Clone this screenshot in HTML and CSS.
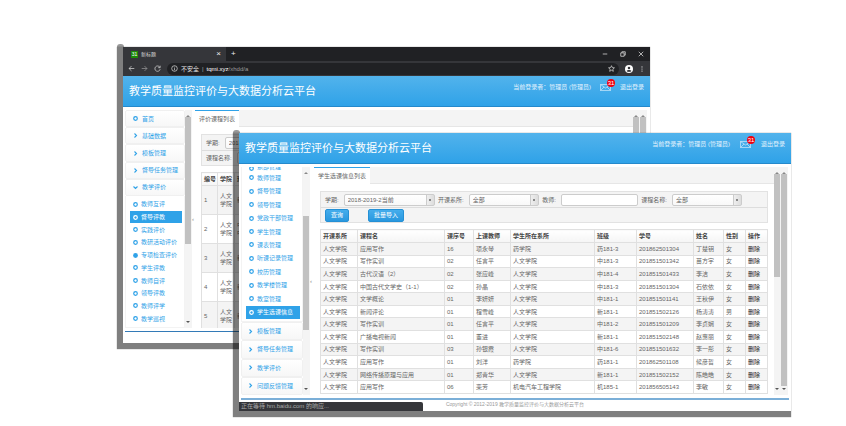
FILE: index.html
```html
<!DOCTYPE html>
<html lang="zh-CN">
<head>
<meta charset="utf-8">
<meta name="viewport" content="width=device-width, initial-scale=1">
<title>教学质量监控评价与大数据分析云平台</title>
<link rel="stylesheet" href="styles.css">
</head>
<body>
<svg class="sprite" aria-hidden="true">
  <symbol id="ring" viewBox="0 0 10 10"><circle cx="5" cy="5" r="3.6" fill="none" stroke="currentColor" stroke-width="2.4"/></symbol>
  <symbol id="dot" viewBox="0 0 10 10"><circle cx="5" cy="5" r="4.8" fill="currentColor"/></symbol>
  <symbol id="right" viewBox="0 0 10 10"><path d="M3 1l4 4-4 4" fill="none" stroke="currentColor" stroke-width="2.2"/></symbol>
  <symbol id="down" viewBox="0 0 10 10"><path d="M1 3l4 4 4-4" fill="none" stroke="currentColor" stroke-width="2.2"/></symbol>
  <symbol id="mail" viewBox="0 0 22 14"><path d="M1 1h20v12H1zM1 1l10 7 10-7M1 13l7-7M21 13l-7-7" fill="none" stroke="currentColor" stroke-width="1.2"/></symbol>
</svg>
<main class="desktop">
  <section class="window window-back">
    <div class="tabstrip">
      <div class="browser-tab"><span class="favicon">31</span><span>新标题</span><button class="close" aria-label="关闭标签">×</button></div>
      <button class="new-tab" aria-label="新标签">+</button>
      <div class="controls">
        <svg viewBox="0 0 8 8"><path d="M1 4h6"/></svg>
        <svg viewBox="0 0 8 8"><path d="M1 2.500h4.500V7H1zM2.500 2.500V1H7v4.500H5.500"/></svg>
        <svg viewBox="0 0 8 8"><path d="M1 1l6 6M7 1L1 7"/></svg>
      </div>
    </div>
    <div class="addressbar">
      <svg class="nav" viewBox="0 0 10 10"><path d="M9 5H1.500M5 1.500L1.500 5 5 8.500"/></svg>
      <svg class="nav dim" viewBox="0 0 10 10"><path d="M1 5h7.500M5 1.500L8.500 5 5 8.500"/></svg>
      <svg class="nav" viewBox="0 0 10 10"><path d="M8.200 3A3.800 3.800 0 1 0 8.800 6M8.800 1v2.800H6"/></svg>
      <div class="url">
        <svg viewBox="0 0 10 10"><circle cx="5" cy="5" r="4"/><path d="M5 4.500V7.500M5 2.500v1"/></svg>
        <span>不安全</span><span class="dim">|</span><span class="address"><b>tqmi.xyz</b>/xhdd/a</span>
        <svg class="star" viewBox="0 0 10 10"><path d="M5 1l1.200 2.700 3 .3-2.300 2 .7 3L5 7.500 2.400 9l.7-3L.8 4l3-.3z"/></svg>
      </div>
      <svg class="avatar" viewBox="0 0 10 10"><circle cx="5" cy="5" r="5" fill="#fff"/><circle cx="5" cy="3.800" r="1.600" fill="#35363a"/><path d="M2 7.500C3 5.800 7 5.800 8 7.500 7 9 3 9 2 7.500z" fill="#35363a"/></svg>
      <svg class="more" viewBox="0 0 10 10"><circle cx="5" cy="1.500" r="1"/><circle cx="5" cy="5" r="1"/><circle cx="5" cy="8.500" r="1"/></svg>
    </div>
    <header class="banner">
      <h1>教学质量监控评价与大数据分析云平台</h1>
      <div class="account"><span>当前登录者：管理员 (管理员)</span><a class="mail" href="#" aria-label="消息"><svg><use href="#mail"/></svg><span class="badge">31</span></a><a href="#">退出登录</a></div>
    </header>
    <div class="workspace">
      <nav class="sidebar">
        <a class="group" href="#"><svg><use href="#ring"/></svg>首页</a>
        <a class="group" href="#"><svg><use href="#right"/></svg>基础数据</a>
        <a class="group" href="#"><svg><use href="#right"/></svg>模板管理</a>
        <a class="group" href="#"><svg><use href="#right"/></svg>督导任务管理</a>
        <a class="group open" href="#"><svg><use href="#down"/></svg>教学评价</a>
        <div class="submenu">
          <a href="#"><svg><use href="#ring"/></svg>教师互评</a>
          <a class="active" href="#"><svg><use href="#ring"/></svg>督导评教</a>
          <a href="#"><svg><use href="#ring"/></svg>实践评价</a>
          <a href="#"><svg><use href="#ring"/></svg>教研活动评价</a>
          <a href="#"><svg><use href="#dot"/></svg>专项检查评价</a>
          <a href="#"><svg><use href="#ring"/></svg>学生评教</a>
          <a href="#"><svg><use href="#ring"/></svg>教师自评</a>
          <a href="#"><svg><use href="#ring"/></svg>领导评教</a>
          <a href="#"><svg><use href="#ring"/></svg>教师评学</a>
          <a href="#"><svg><use href="#ring"/></svg>教学巡视</a>
        </div>
      </nav>
      <div class="scrollbar"><i class="up"></i><i class="thumb thumb-mid"></i><i class="down"></i></div>
      <div class="splitter">‹</div>
      <div class="content">
        <div class="tabs"><a class="tab" href="#">评价课程列表</a></div>
        <div class="panel">
          <form class="filters">
            <div class="filter-row"><label>学期:<select><option>2018-2019-2当前</option></select></label></div>
            <div class="filter-row"><label>课程名称:<select><option>全部</option></select></label></div>
          </form>
          <table class="grid tall">
            <colgroup><col class="w-no"><col class="w-dept-s"><col></colgroup>
            <thead><tr><th>编号</th><th>学院</th><th>班级</th></tr></thead>
            <tbody>
              <tr><td>1</td><td>人文学院</td><td>新181-1</td></tr>
              <tr><td>2</td><td>人文学院</td><td>中181-1<br>中181-2</td></tr>
              <tr><td>3</td><td>人文学院</td><td>新181-1</td></tr>
              <tr><td>4</td><td>人文学院</td><td>新181-1</td></tr>
              <tr><td>5</td><td>人文学院</td><td>新181-1</td></tr>
              <tr><td></td><td></td><td></td></tr>
            </tbody>
          </table>
        </div>
      </div>
      <div class="scrollbar"><i class="up"></i><i class="thumb thumb-mid"></i><i class="down"></i></div>
      <div class="scrollbar"><i class="up"></i><i class="thumb thumb-long"></i><i class="down"></i></div>
    </div>
    <footer class="footer"></footer>
  </section>

  <section class="window window-front">
    <header class="banner">
      <h1>教学质量监控评价与大数据分析云平台</h1>
      <div class="account"><span>当前登录者：管理员 (管理员)</span><a class="mail" href="#" aria-label="消息"><svg><use href="#mail"/></svg><span class="badge">31</span></a><a href="#">退出登录</a></div>
    </header>
    <div class="workspace">
      <nav class="sidebar">
        <div class="submenu">
          <a class="clipped" href="#"><svg><use href="#ring"/></svg>系部管理</a>
          <a href="#"><svg><use href="#ring"/></svg>教师管理</a>
          <a href="#"><svg><use href="#ring"/></svg>督导管理</a>
          <a href="#"><svg><use href="#ring"/></svg>领导管理</a>
          <a href="#"><svg><use href="#ring"/></svg>党政干部管理</a>
          <a href="#"><svg><use href="#ring"/></svg>学生管理</a>
          <a href="#"><svg><use href="#ring"/></svg>课表管理</a>
          <a href="#"><svg><use href="#ring"/></svg>听课记录管理</a>
          <a href="#"><svg><use href="#ring"/></svg>校历管理</a>
          <a href="#"><svg><use href="#ring"/></svg>教学楼管理</a>
          <a href="#"><svg><use href="#ring"/></svg>教室管理</a>
          <a class="active" href="#"><svg><use href="#ring"/></svg>学生选课信息</a>
        </div>
        <a class="group" href="#"><svg><use href="#right"/></svg>模板管理</a>
        <a class="group" href="#"><svg><use href="#right"/></svg>督导任务管理</a>
        <a class="group" href="#"><svg><use href="#right"/></svg>教学评价</a>
        <a class="group" href="#"><svg><use href="#right"/></svg>问题反馈管理</a>
      </nav>
      <div class="scrollbar"><i class="up"></i><i class="thumb thumb-low"></i><i class="down"></i></div>
      <div class="splitter">‹</div>
      <div class="content">
        <div class="tabs"><a class="tab" href="#">学生选课信息列表</a></div>
        <div class="panel">
          <form class="filters">
            <div class="filter-row">
              <label>学期:<select class="wide"><option>2018-2019-2当前</option></select></label>
              <label>开课系所:<select><option>全部</option></select></label>
              <label>教师:<input type="text"></label>
              <label>课程名称:<select><option>全部</option></select></label>
            </div>
            <div class="filter-row actions"><button type="button">查询</button><button type="button">批量导入</button></div>
          </form>
          <table class="grid">
            <colgroup><col class="w-dept"><col><col class="w-seq"><col class="w-teacher"><col class="w-school"><col class="w-class"><col class="w-id"><col class="w-name"><col class="w-act"><col class="w-act"></colgroup>
            <thead><tr><th>开课系所</th><th>课程名</th><th>课序号</th><th>上课教师</th><th>学生所在系所</th><th>班级</th><th>学号</th><th>姓名</th><th>性别</th><th>操作</th></tr></thead>
            <tbody>
              <tr><td>人文学院</td><td>应用写作</td><td>16</td><td>项永琴</td><td>药学院</td><td>药181-3</td><td>201862501304</td><td>丁楚钥</td><td>女</td><td><a href="#">删除</a></td></tr>
              <tr><td>人文学院</td><td>写作实训</td><td>02</td><td>任言平</td><td>人文学院</td><td>中181-3</td><td>201851501342</td><td>苗方宇</td><td>女</td><td><a href="#">删除</a></td></tr>
              <tr><td>人文学院</td><td>古代汉语（2）</td><td>02</td><td>张应峰</td><td>人文学院</td><td>中181-4</td><td>201851501433</td><td>李洁</td><td>女</td><td><a href="#">删除</a></td></tr>
              <tr><td>人文学院</td><td>中国古代文学史（1-1）</td><td>02</td><td>孙晶</td><td>人文学院</td><td>中181-3</td><td>201851501304</td><td>石依依</td><td>女</td><td><a href="#">删除</a></td></tr>
              <tr><td>人文学院</td><td>文学概论</td><td>01</td><td>李妍妍</td><td>人文学院</td><td>中181-1</td><td>201851501141</td><td>王秋伊</td><td>女</td><td><a href="#">删除</a></td></tr>
              <tr><td>人文学院</td><td>新闻评论</td><td>01</td><td>程雪峰</td><td>人文学院</td><td>新181-1</td><td>201851502126</td><td>杨涛涛</td><td>男</td><td><a href="#">删除</a></td></tr>
              <tr><td>人文学院</td><td>写作实训</td><td>01</td><td>任言平</td><td>人文学院</td><td>中181-2</td><td>201851501209</td><td>李贞娴</td><td>女</td><td><a href="#">删除</a></td></tr>
              <tr><td>人文学院</td><td>广播电视新闻</td><td>01</td><td>董进</td><td>人文学院</td><td>新181-1</td><td>201851502148</td><td>赵惠丽</td><td>女</td><td><a href="#">删除</a></td></tr>
              <tr><td>人文学院</td><td>写作实训</td><td>03</td><td>孙银霞</td><td>人文学院</td><td>中181-6</td><td>201851501632</td><td>李一彤</td><td>女</td><td><a href="#">删除</a></td></tr>
              <tr><td>人文学院</td><td>应用写作</td><td>01</td><td>刘洋</td><td>药学院</td><td>药181-1</td><td>201862501108</td><td>候彦哲</td><td>女</td><td><a href="#">删除</a></td></tr>
              <tr><td>人文学院</td><td>网络传播原理与应用</td><td>01</td><td>郑青华</td><td>人文学院</td><td>新181-1</td><td>201851502152</td><td>陈皓皓</td><td>女</td><td><a href="#">删除</a></td></tr>
              <tr><td>人文学院</td><td>应用写作</td><td>06</td><td>栾芳</td><td>机电汽车工程学院</td><td>机185-1</td><td>201856505143</td><td>李敏</td><td>女</td><td><a href="#">删除</a></td></tr>
            </tbody>
          </table>
        </div>
      </div>
      <div class="scrollbar"><i class="up"></i><i class="thumb thumb-half"></i><i class="down"></i></div>
      <div class="scrollbar"><i class="up"></i><i class="thumb thumb-long"></i><i class="down"></i></div>
    </div>
    <footer class="footer">Copyright © 2012-2019 教学质量监控评价与大数据分析云平台</footer>
    <div class="status">正在等待 hm.baidu.com 的响应...</div>
  </section>
</main>
</body>
</html>
```
FILE: styles.css
```css
* { box-sizing: border-box; }
body {
  margin: 0;
  background: #fff;
  color: #666;
  font: 6px/8px "Liberation Sans", "Noto Sans CJK SC", sans-serif;
}
a { color: inherit; text-decoration: none; }
button, select, input { font: inherit; color: inherit; margin: 0; padding: 0; }
.sprite { position: absolute; width: 0; height: 0; }
.desktop { position: relative; min-height: 100vh; }

/* Windows */
.window {
  position: absolute;
  display: flex;
  flex-direction: column;
  background: #fff;
  box-shadow: -3px 3px 1px 3px rgba(0, 0, 0, .5);
}
.window::before {
  content: "";
  position: absolute;
  left: -6px;
  top: -3px;
  width: 7px;
  height: 3px;
  border-radius: 3px 3px 0 0;
  background: rgba(0, 0, 0, .4);
}
.window-back { top: 47px; left: calc(50% - 300px); right: calc(50% - 227px); }
.window-front { top: 133px; left: calc(50% - 184px); right: calc(50% - 368px); }

/* Browser chrome */
.tabstrip { display: flex; align-items: center; height: 14px; background: #202124; color: #ddd; }
.browser-tab { display: flex; align-items: center; gap: 3px; width: 103px; height: 14px; padding: 0 5px 0 8px; background: #35363a; font-size: 5px; }
.favicon { width: 7px; height: 7px; background: #1c8a08; color: #fff; font-size: 5px; line-height: 7px; text-align: center; }
.close, .new-tab { border: 0; background: none; color: #eee; font-size: 8px; line-height: 8px; }
.close { margin-left: auto; }
.new-tab { margin-left: 5px; }
.controls { display: flex; gap: 12px; margin-left: auto; padding-right: 6px; }
.controls svg { width: 6px; height: 6px; }
.controls svg, .nav, .url svg { fill: none; stroke: #ddd; stroke-width: 1; }
.addressbar { display: flex; align-items: center; gap: 6px; height: 15px; padding: 0 5px; background: #35363a; color: #e8e8e8; }
.nav { width: 7px; height: 7px; }
.url { display: flex; flex: 1; align-items: center; gap: 3px; height: 12px; padding: 0 4px; border-radius: 6px; background: #202124; }
.url svg { width: 7px; height: 7px; }
.url .star { margin-left: auto; }
.dim { opacity: .6; }
.address { color: #999; }
.address b { color: #fff; font-weight: 400; }
.avatar { width: 8px; height: 8px; }
.more { width: 6px; height: 6px; fill: #ddd; }

/* Application header */
.banner {
  display: flex;
  align-items: center;
  justify-content: space-between;
  height: 31px;
  padding: 0 6px;
  background: linear-gradient(#52b3ec, #2fa2e8);
  border-bottom: 1px solid #2589cb;
  color: #fff;
}
.banner h1 { margin: 0; font-size: 11px; line-height: 16px; font-weight: 400; }
.account { display: flex; align-items: center; gap: 10px; padding-bottom: 8px; color: #e4f3fd; }
.window-back .account { gap: 9px; }
.mail { position: relative; display: flex; width: 11px; }
.mail svg { width: 11px; height: 7px; }
.badge { position: absolute; left: 7px; top: -5px; width: 8px; height: 8px; border-radius: 4px; background: #f00010; color: #fff; text-align: center; }

/* Workspace */
.workspace { display: flex; padding: 3px 3px 0 2px; overflow: hidden; }
.window-back .workspace { height: 221px; }
.window-front .workspace { height: 231px; }
.sidebar { display: flex; flex-direction: column; width: 60px; overflow: hidden; color: #2fa2e8; }
.window-front .sidebar { width: 62px; }
.sidebar svg { flex: none; width: 5px; height: 5px; }
.group { display: flex; flex: 1 0 17px; align-items: center; gap: 4px; padding-left: 7px; border: 1px solid #f0f0f0; border-radius: 2px; background: linear-gradient(#fff, #f7f7f7); }
.window-front .group { padding-left: 6px; }
.submenu { display: flex; flex-direction: column; padding: 2px 2px 2px 4px; border: 1px solid #f3f3f3; border-top: 0; }
.window-back .submenu { height: 132px; }
.window-front .submenu { height: 155px; padding-top: 0; }
.submenu a { display: flex; flex: 1; align-items: center; gap: 3px; padding-left: 3px; }
.submenu .clipped { flex: 0 0 4px; align-items: flex-end; overflow: hidden; }
.submenu .active { background: #2fa2e8; color: #fff; }
.scrollbar { display: flex; flex: none; flex-direction: column; width: 7px; padding: 0 1px 0 0; background: #f4f4f4; }
.up, .down { flex: none; align-self: center; width: 0; height: 7px; border: 2px solid transparent; }
.up { border-bottom-color: #888; border-top-width: 1px; }
.down { margin-top: auto; border-top-color: #555; border-bottom-width: 1px; }
.thumb { background: #c1c1c1; }
.thumb-mid { height: 127px; }
.thumb-low { height: 114px; margin-top: 42px; }
.thumb-half { height: 103px; }
.thumb-long { height: 212px; }
.splitter { display: flex; flex: none; align-items: center; width: 4px; color: #888; }
.window-back .splitter { width: 3px; }
.content { flex: 1; min-width: 0; overflow: hidden; }
.tabs { display: flex; height: 17px; background: #f4f4f4; border-bottom: 1px solid #e6e6e6; }
.tab { height: 17px; padding: 4px 4px 0; border-top: 1px solid #2fa2e8; background: #fff; }
.panel { padding: 7px 6px 0; }

/* Filters */
.filters { margin-bottom: 6px; border: 1px solid #e2e2e2; background: #f4f4f4; }
.filter-row { display: flex; align-items: center; justify-content: space-between; height: 15px; padding: 0 25px 0 4px; }
.filter-row + .filter-row { border-top: 1px solid #ddd; }
.filter-row label { display: flex; align-items: center; gap: 5px; white-space: nowrap; }
.filter-row select, .filter-row input { height: 12px; border: 1px solid #ccc; border-radius: 2px; background: #fff; padding: 0 3px; }
.filter-row select {
  width: 70px;
  appearance: none;
  background: linear-gradient(#888, #888) right 3px center / 2px 2px no-repeat, linear-gradient(#ccc, #ccc) right 7px center / 1px 100% no-repeat, linear-gradient(90deg, #eee, #ddd) right / 7px 100% no-repeat, linear-gradient(#fff, #f8f8f8);
}
.filter-row select.wide { width: 91px; }
.filter-row input { width: 77px; }
.actions { justify-content: flex-start; gap: 19px; }
.actions button { height: 13px; padding: 0 5px; border: 1px solid #2590d5; border-radius: 2px; background: linear-gradient(#45adec, #2998df); color: #fff; }

/* Data tables */
.grid { width: 100%; height: 165px; table-layout: fixed; border-collapse: collapse; border: 1px solid #ddd; }
.grid thead tr { height: 13px; }
.grid th, .grid td { padding: 0 2px; border: 1px solid #e0e0e0; text-align: left; white-space: nowrap; overflow: hidden; }
.grid th { color: #444; background: linear-gradient(#fff, #f5f5f5); }
.grid tbody tr { height: 12px; }
.grid tbody tr:nth-child(odd) { background: #f4f4f4; }
.grid td a { color: #222; }
.w-dept { width: 37px; }
.w-seq { width: 29px; }
.w-teacher { width: 37px; }
.w-school { width: 84px; }
.w-class { width: 42px; }
.w-id { width: 57px; }
.w-name { width: 30px; }
.w-act { width: 22px; }
.w-no { width: 16px; }
.w-dept-s { width: 17px; }
.grid.tall { height: auto; }
.tall tbody tr { height: 29px; }
.tall td { white-space: normal; }
.grid.tall tbody tr { height: 29px; }
.window-back .filter-row { justify-content: flex-start; }

/* Footer */
.footer { height: 13px; margin: 3px 2px 0; border-top: 2px solid #7bafd8; color: #999; font-size: 5px; line-height: 8px; text-align: center; }
.window-back .footer { height: 12px; border-top-color: #337ab7; border-top-width: 1px; }
.status { position: absolute; left: 0; bottom: 0; width: 184px; height: 9px; padding-left: 2px; overflow: hidden; border-radius: 0 2px 0 0; background: #35363a; color: #aaa; line-height: 9px; }
```
